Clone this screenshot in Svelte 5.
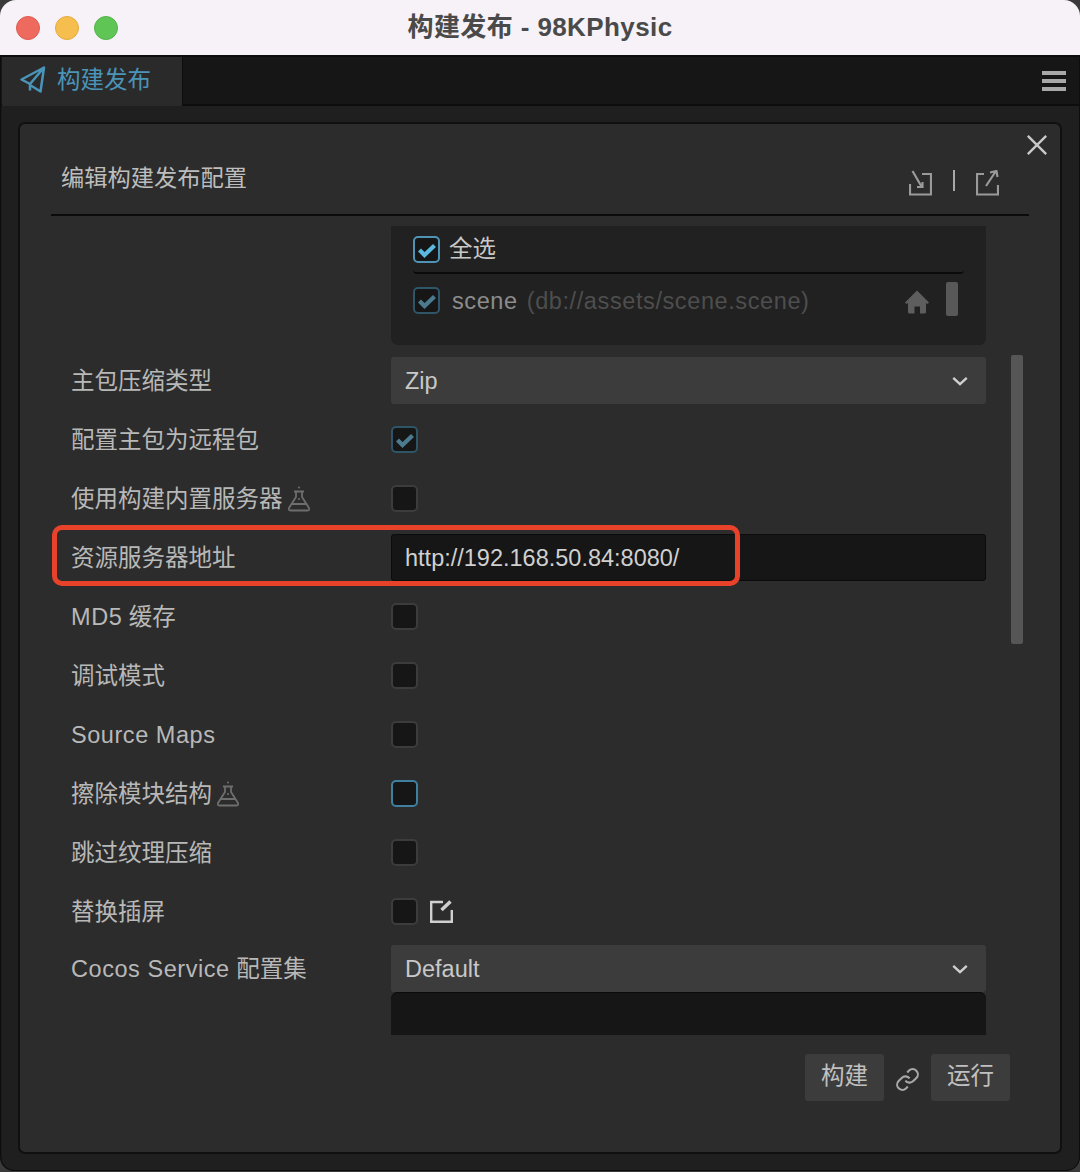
<script>
	const rowsTop = [
		{ label: '配置主包为远程包', type: 'check', checked: true },
		{ label: '使用构建内置服务器', type: 'check', flask: true },
		{ label: '资源服务器地址', type: 'input', value: 'http://192.168.50.84:8080/' },
		{ label: ' 缓存', latin: 'MD5', type: 'check' },
		{ label: '调试模式', type: 'check' },
		{ label: '', latin: 'Source Maps', type: 'check' },
		{ label: '擦除模块结构', type: 'check', flask: true, focus: true },
		{ label: '跳过纹理压缩', type: 'check' },
		{ label: '替换插屏', type: 'check', edit: true }
	];
</script>

{#snippet tick()}
	<svg viewBox="0 0 27 27" class="tick"><path d="M6.500 14l5 5 10-9.500" /></svg>
{/snippet}

{#snippet chevron()}
	<svg viewBox="0 0 20 12" class="chevron"><path d="M2.500 2.500l7.500 7 7.500-7" /></svg>
{/snippet}

{#snippet flask()}
	<svg viewBox="0 0 22 26" class="flask">
		<path d="M6 5.500h10M8 5.500V11L1 22q-1 2.500 1.500 2.500h17q2.500 0 1.500-2.500L14 11V5.500M4.500 18h13" />
		<circle cx="11" cy="1.500" r="1" />
		<circle cx="11" cy="13" r="1" />
	</svg>
{/snippet}

<div class="window">
	<header class="titlebar">
		<div class="lights">
			<span class="light red"></span>
			<span class="light yellow"></span>
			<span class="light green"></span>
		</div>
		<span class="wintitle">构建发布 - 98KPhysic</span>
	</header>

	<div class="shell">
		<nav class="tabs">
			<div class="tab">
				<svg viewBox="0 0 26 28" class="plane">
					<path d="M24 1.500L1.500 13.500l8.500 4.500L24 1.500 20.500 25.500 10 19v5.500" />
				</svg>
				<span>构建发布</span>
			</div>
			<div class="burger"><i></i><i></i><i></i></div>
		</nav>

		<div class="content">
			<section class="panel">
				<svg viewBox="0 0 24 24" class="close"><path d="M2 2l20 20M22 2L2 22" /></svg>

				<div class="head">
					<h1>编辑构建发布配置</h1>
					<div class="tools">
						<svg viewBox="0 0 23 26" class="tool">
							<path d="M13 4h9v20.500H1V14M3.500 1l9 15.500M8 17h5.500v-5" />
						</svg>
						<i class="sep"></i>
						<svg viewBox="0 0 23 26" class="tool">
							<path d="M8 4H1v20.500h21V15M10 16L20 1M14 2.500L20.500 1l1 6" />
						</svg>
					</div>
				</div>

				<div class="scroll">
					<div class="row assets-row">
						<div class="assets">
							<div class="scene-head">
								<span class="box active">{@render tick()}</span>
								<span class="all">全选</span>
							</div>
							<div class="scene-row">
								<span class="box dim">{@render tick()}</span>
								<span class="scene">scene</span>
								<span class="path">(db://assets/scene.scene)</span>
								<svg viewBox="0 0 24 24" class="home">
									<path d="M12 .5L24 12.500l-1.500 1.500-1.500-1v9q0 1.500-1.500 1.500H15v-7H9.500v7H4.500Q3 23.500 3 22v-9l-1.500 1L0 12.500z" />
								</svg>
								<span class="grip"></span>
							</div>
						</div>
					</div>

					<div class="row">
						<span class="label">主包压缩类型</span>
						<div class="select"><span>Zip</span>{@render chevron()}</div>
					</div>

					{#each rowsTop as row}
						<div class="row">
							<span class="label">
								<span>{#if row.latin}<span class="latin">{row.latin}</span>{/if}{row.label}</span>
								{#if row.flask}{@render flask()}{/if}
							</span>
							{#if row.type === 'input'}
								<div class="input">{row.value}</div>
							{:else}
								<span class="box plain" class:dim={row.checked} class:focus={row.focus}>
									{#if row.checked}{@render tick()}{/if}
								</span>
								{#if row.edit}
									<svg viewBox="0 0 23 23" class="edit">
										<path class="frame" d="M13 2H1.200v19.800h20.600V10" />
										<path class="nib" d="M11.500 10L20.500 1.500" />
									</svg>
								{/if}
							{/if}
						</div>
					{/each}

					<div class="row service">
						<span class="label"><span><span class="latin">Cocos Service</span> 配置集</span></span>
						<div class="stack">
							<div class="select"><span>Default</span>{@render chevron()}</div>
							<div class="textarea"></div>
						</div>
					</div>
				</div>

				<div class="scrollbar"></div>

				<footer class="actions">
					<button>构建</button>
					<svg viewBox="0 0 24 24" class="link">
						<path d="M10 13a5 5 0 0 0 7.540.540l3-3a5 5 0 0 0-7.070-7.070l-1.720 1.710" />
						<path d="M14 11a5 5 0 0 0-7.540-.540l-3 3a5 5 0 0 0 7.070 7.070l1.710-1.710" />
					</svg>
					<button>运行</button>
				</footer>
			</section>
		</div>
	</div>

	<div class="callout"></div>
</div>

<style>
	:global(body) {
		margin: 0;
		background: #3a3a3a;
	}
	.window {
		position: relative;
		width: 1080px;
		height: 1172px;
		display: flex;
		flex-direction: column;
		font-family: "Liberation Sans", "Noto Sans CJK SC", sans-serif;
		line-height: 30px;
		overflow: hidden;
		border-radius: 16px 16px 0 0;
	}
	.titlebar {
		height: 55px;
		flex: none;
		background: #f6f2f8;
		display: flex;
		align-items: center;
		justify-content: center;
		position: relative;
	}
	.lights {
		position: absolute;
		left: 16px;
		top: 16px;
		display: flex;
		gap: 15px;
	}
	.light {
		width: 24px;
		height: 24px;
		border-radius: 50%;
		box-sizing: border-box;
	}
	.red {
		background: #ee6a5f;
		border: 1px solid #dd5b50;
	}
	.yellow {
		background: #f6be4f;
		border: 1px solid #e4aa3e;
	}
	.green {
		background: #5fc554;
		border: 1px solid #52b348;
	}
	.wintitle {
		font-size: 26px;
		font-weight: 700;
		letter-spacing: .4px;
		color: #4a4a4a;
		margin-bottom: 2px;
	}
	.shell {
		flex: 1;
		display: flex;
		flex-direction: column;
		background: #1f1f1f;
		border: 2px solid #0d0d0d;
		border-width: 2px 1px 1px;
		box-shadow: inset 1px 0 #1a1a1a;
		margin-bottom: 1px;
		border-radius: 0 0 14px 14px;
		min-height: 0;
	}
	.tabs {
		height: 47px;
		flex: none;
		display: flex;
		background: #161616;
		border-bottom: 2px solid #0d0d0d;
		align-items: stretch;
		justify-content: space-between;
	}
	.tab {
		width: 181px;
		margin-left: 1px;
		margin-bottom: -2px;
		background: #2a2a2a;
		border-right: 1px solid #0d0d0d;
		display: flex;
		align-items: center;
		box-sizing: border-box;
		padding: 0 0 3px 18px;
		gap: 11px;
		color: #4a94b8;
		font-size: 23.500px;
	}
	.plane {
		width: 26px;
		height: 28px;
		fill: none;
		stroke: #4a94b8;
		stroke-width: 2.500;
		stroke-linejoin: round;
	}
	.burger {
		display: flex;
		flex-direction: column;
		justify-content: center;
		gap: 4px;
		margin-right: 13px;
	}
	.burger i {
		display: block;
		width: 24px;
		height: 4px;
		background: #a8a8a8;
	}
	.content {
		flex: 1;
		min-height: 0;
		display: flex;
		padding: 16px 17px 16px 17px;
	}
	.panel {
		position: relative;
		flex: 1;
		min-width: 0;
		background: #2c2c2c;
		border: 2px solid #101010;
		border-radius: 7px;
		display: flex;
		flex-direction: column;
	}
	.close {
		position: absolute;
		right: 12px;
		top: 10px;
		width: 22px;
		height: 22px;
		fill: none;
		stroke: #c8c8c8;
		stroke-width: 2.600;
	}
	.head {
		height: 92px;
		flex: none;
		box-sizing: border-box;
		margin: 0 31px;
		border-bottom: 2px solid #0b0b0b;
		display: flex;
		align-items: flex-end;
		justify-content: space-between;
		padding: 0 30px 18px 10px;
	}
	.head h1 {
		margin: 0 0 3px;
		font-size: 23.250px;
		font-weight: 400;
		color: #bdbdbd;
	}
	.tools {
		display: flex;
		align-items: flex-start;
		gap: 21px;
	}
	.tool {
		width: 23px;
		height: 26px;
		fill: none;
		stroke: #9a9a9a;
		stroke-width: 2.200;
	}
	.sep {
		width: 2px;
		height: 21px;
		background: #a8a8a8;
	}
	.scroll {
		margin-top: 10px;
		height: 809px;
		flex: none;
		overflow: hidden;
		padding-left: 51px;
	}
	.row {
		height: 59px;
		width: 915px;
		display: flex;
		align-items: center;
	}
	.label {
		width: 320px;
		flex: none;
		display: flex;
		align-items: center;
		gap: 5px;
		font-size: 23.500px;
		color: #b8b8b8;
		white-space: pre;
	}
	.latin {
		letter-spacing: .55px;
	}
	.assets-row {
		height: auto;
		padding-left: 320px;
		box-sizing: border-box;
		margin-bottom: 6px;
	}
	.assets {
		width: 595px;
		height: 119px;
		background: #212121;
		border-radius: 0 0 7px 7px;
		box-sizing: border-box;
		padding: 0 22px;
	}
	.scene-head {
		height: 46px;
		display: flex;
		align-items: center;
		border-bottom: 2px solid #0b0b0b;
		border-radius: 0 0 4px 4px;
		gap: 9px;
	}
	.all {
		font-size: 23.500px;
		color: #c8c8c8;
	}
	.scene-row {
		display: flex;
		align-items: center;
		height: 53px;
		font-size: 23.500px;
		letter-spacing: .6px;
		position: relative;
	}
	.scene {
		color: #8c8c8c;
		margin-left: 12px;
	}
	.path {
		color: #4e4e4e;
		margin-left: 9px;
	}
	.home {
		position: absolute;
		right: 35px;
		top: 16px;
		width: 24px;
		height: 24px;
		fill: #5e5e5e;
	}
	.grip {
		position: absolute;
		right: 6px;
		top: 8px;
		width: 12px;
		height: 34px;
		border-radius: 2px;
		background: #585858;
	}
	.box {
		width: 27px;
		height: 27px;
		flex: none;
		box-sizing: border-box;
		border: 2px solid #3c3c3c;
		border-radius: 5px;
		background: #161616;
		display: block;
		position: relative;
	}
	.box.active {
		border-color: #4f94b6;
	}
	.box.dim {
		border-color: #2f5568;
	}
	.box.focus {
		border-color: #3f7f9f;
	}
	.tick {
		position: absolute;
		left: -2px;
		top: -2px;
		width: 27px;
		height: 27px;
		fill: none;
		stroke: #5ab9df;
		stroke-width: 4.200;
	}
	.dim .tick {
		stroke: #4c7b90;
	}
	.select {
		width: 595px;
		height: 47px;
		box-sizing: border-box;
		background: #3c3c3c;
		border-radius: 3px;
		display: flex;
		align-items: center;
		justify-content: space-between;
		padding: 0 17px 0 14px;
		font-size: 23.500px;
		color: #c8c8c8;
	}
	.chevron {
		width: 18px;
		height: 12px;
		fill: none;
		stroke: #d0d0d0;
		stroke-width: 2.600;
	}
	.input {
		width: 595px;
		height: 47px;
		box-sizing: border-box;
		background: #161616;
		border: 1px solid #0b0b0b;
		border-radius: 3px;
		display: flex;
		align-items: center;
		padding-left: 13px;
		font-size: 23.500px;
		color: #d0d0d0;
	}
	.flask {
		width: 22px;
		height: 26px;
		flex: none;
		fill: none;
		stroke: #6e6e6e;
		stroke-width: 1.800;
	}
	.flask circle {
		fill: #6e6e6e;
		stroke: none;
	}
	.edit {
		width: 23px;
		height: 23px;
		margin-left: 12px;
		fill: none;
		stroke: #d0d0d0;
	}
	.frame {
		stroke-width: 2.400;
	}
	.nib {
		stroke-width: 3.500;
	}
	.service {
		height: auto;
		align-items: flex-start;
		padding-top: 4px;
	}
	.service .label {
		height: 47px;
	}
	.stack {
		width: 595px;
		display: flex;
		flex-direction: column;
	}
	.textarea {
		height: 70px;
		background: #161616;
		border-radius: 7px 7px 0 0;
		box-shadow: inset 0 1px #0b0b0b;
	}
	.scrollbar {
		position: absolute;
		left: 991px;
		top: 231px;
		width: 12px;
		height: 289px;
		background: #565656;
		border-radius: 2px;
	}
	.actions {
		flex: 1;
		display: flex;
		align-items: flex-start;
		justify-content: flex-end;
		padding: 19px 50px 0 0;
	}
	.actions button {
		width: 79px;
		height: 47px;
		border: none;
		border-radius: 3px;
		background: #3c3c3c;
		color: #c0c0c0;
		font-family: inherit;
		font-size: 23.500px;
		padding: 0 0 7px;
	}
	.link {
		width: 25px;
		height: 25px;
		margin: 13px 11px 0;
		fill: none;
		stroke: #a8a8a8;
		stroke-width: 2;
	}
	.callout {
		position: absolute;
		left: 52px;
		top: 525px;
		width: 688px;
		height: 61px;
		box-sizing: border-box;
		border: 5px solid #e8432a;
		border-radius: 10px;
	}
</style>
